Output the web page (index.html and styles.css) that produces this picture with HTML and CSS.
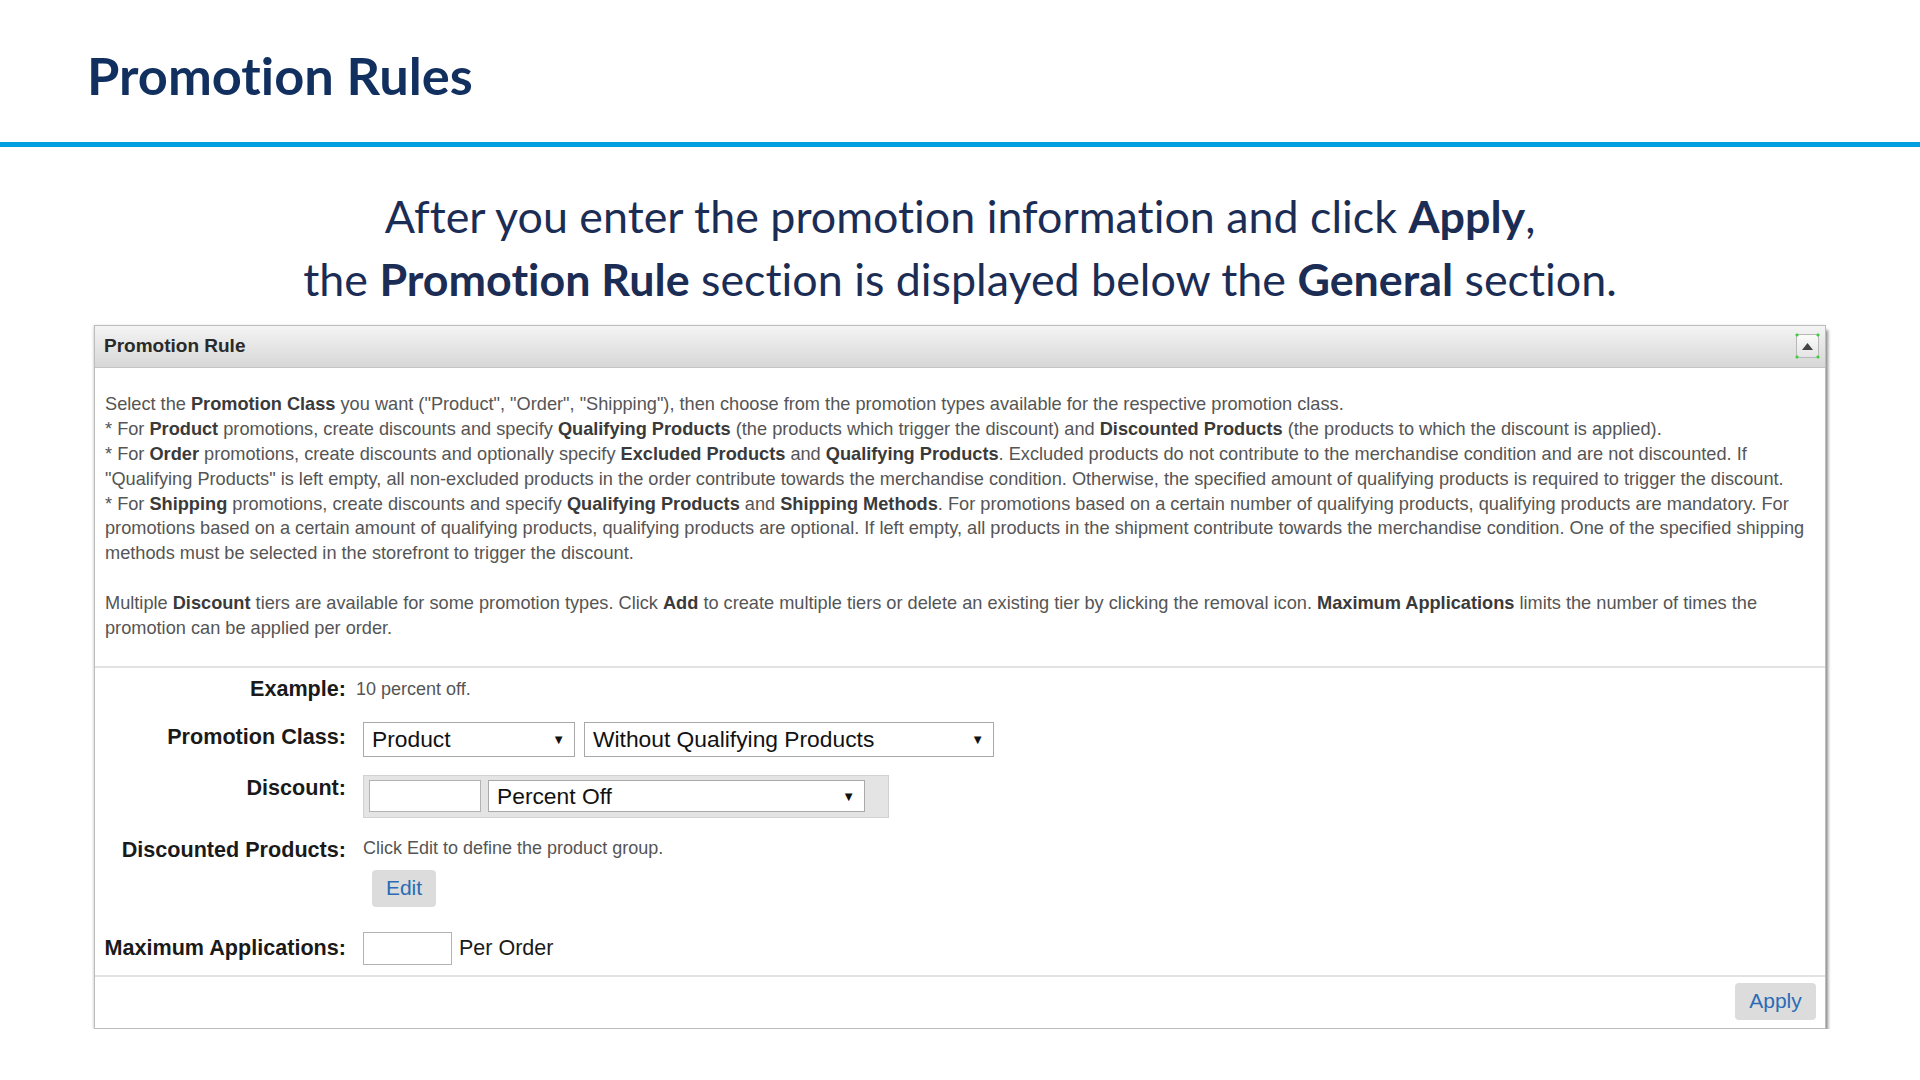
FILE: index.html
```html
<!DOCTYPE html>
<html lang="en">
<head>
    <meta charset="UTF-8">
    <title>Promotion Rules</title>
    <link rel="stylesheet" href="styles.css">
</head>
<body>
    <header class="slide-head">
        <h1>Promotion Rules</h1>
    </header>

    <p class="lead">
        After you enter the promotion information and click <b>Apply</b>,<br>
        the <b>Promotion Rule</b> section is displayed below the <b>General</b> section.
    </p>

    <section class="panel">
        <div class="panel-head">
            <h2>Promotion Rule</h2>
            <button class="collapse" title="Collapse">
                <svg width="11" height="7" viewBox="0 0 11 7"><path d="M0 7 L5.5 0 L11 7 Z" fill="#444"/></svg>
            </button>
        </div>

        <div class="desc">
            <p>Select the <b>Promotion Class</b> you want ("Product", "Order", "Shipping"), then choose from the promotion types available for the respective promotion class.</p>
            <p>* For <b>Product</b> promotions, create discounts and specify <b>Qualifying Products</b> (the products which trigger the discount) and <b>Discounted Products</b> (the products to which the discount is applied).</p>
            <p>* For <b>Order</b> promotions, create discounts and optionally specify <b>Excluded Products</b> and <b>Qualifying Products</b>. Excluded products do not contribute to the merchandise condition and are not discounted. If "Qualifying Products" is left empty, all non-excluded products in the order contribute towards the merchandise condition. Otherwise, the specified amount of qualifying products is required to trigger the discount.</p>
            <p>* For <b>Shipping</b> promotions, create discounts and specify <b>Qualifying Products</b> and <b>Shipping Methods</b>. For promotions based on a certain number of qualifying products, qualifying products are mandatory. For promotions based on a certain amount of qualifying products, qualifying products are optional. If left empty, all products in the shipment contribute towards the merchandise condition. One of the specified shipping methods must be selected in the storefront to trigger the discount.</p>
            <p class="gap">Multiple <b>Discount</b> tiers are available for some promotion types. Click <b>Add</b> to create multiple tiers or delete an existing tier by clicking the removal icon. <b>Maximum Applications</b> limits the number of times the promotion can be applied per order.</p>
        </div>

        <div class="form">
            <div class="row row-example">
                <label>Example:</label>
                <span class="hint">10 percent off.</span>
            </div>
            <div class="row row-class">
                <label>Promotion Class:</label>
                <div class="select sel-class"><span>Product</span><span class="caret">&#9660;</span></div>
                <div class="select sel-type"><span>Without Qualifying Products</span><span class="caret">&#9660;</span></div>
            </div>
            <div class="row row-top row-discount">
                <label>Discount:</label>
                <div class="tier">
                    <input type="text" class="field field-amount">
                    <div class="select sel-off"><span>Percent Off</span><span class="caret">&#9660;</span></div>
                </div>
            </div>
            <div class="row row-top row-products">
                <label>Discounted Products:</label>
                <div class="stack">
                    <span class="hint">Click Edit to define the product group.</span>
                    <button class="btn btn-edit">Edit</button>
                </div>
            </div>
            <div class="row row-max">
                <label>Maximum Applications:</label>
                <input type="text" class="field field-max">
                <span class="unit">Per Order</span>
            </div>
        </div>

        <div class="panel-foot">
            <button class="btn">Apply</button>
        </div>
    </section>
</body>
</html>
```

FILE: styles.css
```css
body {
    margin: 0;
    background: #fff;
    font-family: "Liberation Sans", Arial, sans-serif;
}
.slide-head {
    padding: 44px 0 35px 87px;
    border-bottom: 5px solid #00a0e0;
}
.slide-head h1 {
    margin: 0;
    font: 700 52.4px/1.2 Lato, "Open Sans", sans-serif;
    font-variant-ligatures: no-common-ligatures;
    color: #12305f;
}
.lead {
    margin: 38px 0 0;
    text-align: center;
    font: 400 44.8px/63px Lato, "Open Sans", sans-serif;
    font-variant-ligatures: no-common-ligatures;
    color: #1c2d55;
}
.lead b {
    font-weight: 700;
}
.panel {
    margin: 14px 0 0 94px;
    width: 1730px;
    border: 1px solid #bdbdbd;
    box-shadow: 2px 5px 3px rgba(0,0,0,0.45), -1px 0 2px rgba(0,0,0,0.12);
    background: #fff;
}
.panel-head {
    height: 41px;
    display: flex;
    align-items: center;
    justify-content: space-between;
    padding: 0 6px 0 9px;
    background: linear-gradient(#f4f4f4, #d7d7d7);
    border-bottom: 1px solid #c3c3c3;
}
.panel-head h2 {
    margin: 0;
    font-size: 19px;
    font-weight: 700;
    color: #2a2a2a;
}
.collapse {
    position: relative;
    width: 23px;
    height: 24px;
    padding: 0;
    border: 1px solid #b8b8b8;
    border-radius: 3px;
    background: linear-gradient(#fbfbfb, #e4e4e4);
    display: flex;
    align-items: center;
    justify-content: center;
}
/* selection handles on the corners */
.collapse::after {
    content: "";
    position: absolute;
    inset: -2px;
    background:
        radial-gradient(#3ad13a 0 1.3px, transparent 1.8px) left top / 4px 4px no-repeat,
        radial-gradient(#3ad13a 0 1.3px, transparent 1.8px) right top / 4px 4px no-repeat,
        radial-gradient(#3ad13a 0 1.3px, transparent 1.8px) left bottom / 4px 4px no-repeat,
        radial-gradient(#3ad13a 0 1.3px, transparent 1.8px) right bottom / 4px 4px no-repeat;
}
.desc {
    padding: 24px 6px 25px 10px;
    border-bottom: 2px solid #e2e2e2;
    font-size: 18.2px;
    line-height: 24.9px;
    color: #555;
}
.desc p {
    margin: 0;
}
.desc p.gap {
    margin-top: 24.9px;
}
.desc b {
    color: #3a3a3a;
}
.form {
    padding: 9px 0 10px;
    border-bottom: 2px solid #e2e2e2;
}
.row {
    display: flex;
    align-items: center;
}
.row-top {
    align-items: flex-start;
}
.row label {
    width: 251px;
    margin-right: 17px;
    text-align: right;
    font-size: 21.6px;
    line-height: 24px;
    font-weight: 700;
    color: #1a1a1a;
    flex-shrink: 0;
}
.row-example label {
    margin-right: 10px;
}
.row-class {
    margin-top: 21px;
}
.row-class label {
    padding-bottom: 4px;
}
.row-discount {
    margin-top: 18px;
}
.row-discount label {
    padding-top: 1px;
}
.row-products {
    margin-top: 18px;
}
.row-products label {
    padding-top: 2px;
}
.row-max {
    margin-top: 25px;
}
.hint {
    font-size: 18px;
    line-height: 24px;
    color: #555;
}
.select {
    box-sizing: border-box;
    height: 35px;
    display: flex;
    align-items: center;
    justify-content: space-between;
    padding: 0 9px 0 8px;
    background: #fff;
    border: 1px solid #a9a9a9;
    font-size: 22.8px;
    color: #111;
}
.caret {
    font-size: 13px;
    color: #111;
}
.sel-class {
    width: 212px;
}
.sel-type {
    width: 410px;
    margin-left: 9px;
}
.tier {
    box-sizing: border-box;
    width: 526px;
    height: 43px;
    display: flex;
    align-items: center;
    gap: 7px;
    padding: 0 5px;
    background: #e4e4e4;
    border: 1px solid #d2d2d2;
}
.field {
    box-sizing: border-box;
    height: 33px;
    margin: 0;
    border: 1px solid #b3b3b3;
    background: #fff;
}
.field-amount {
    width: 112px;
    height: 32px;
}
.sel-off {
    width: 377px;
    height: 32px;
}
.stack {
    display: flex;
    flex-direction: column;
    align-items: flex-start;
}
.btn {
    height: 37px;
    padding: 0 10px;
    border: none;
    border-radius: 4px;
    background: #dcdcdc;
    color: #2b6cb5;
    font-family: "Liberation Sans", Arial, sans-serif;
    font-size: 21px;
}
.btn-edit {
    width: 64px;
    margin: 10px 0 0 9px;
}
.field-max {
    width: 89px;
}
.unit {
    margin-left: 7px;
    font-size: 21.5px;
    color: #1a1a1a;
}
.panel-foot {
    display: flex;
    justify-content: flex-end;
    padding: 6px 9px 8px;
}
.panel-foot .btn {
    width: 81px;
}
```
